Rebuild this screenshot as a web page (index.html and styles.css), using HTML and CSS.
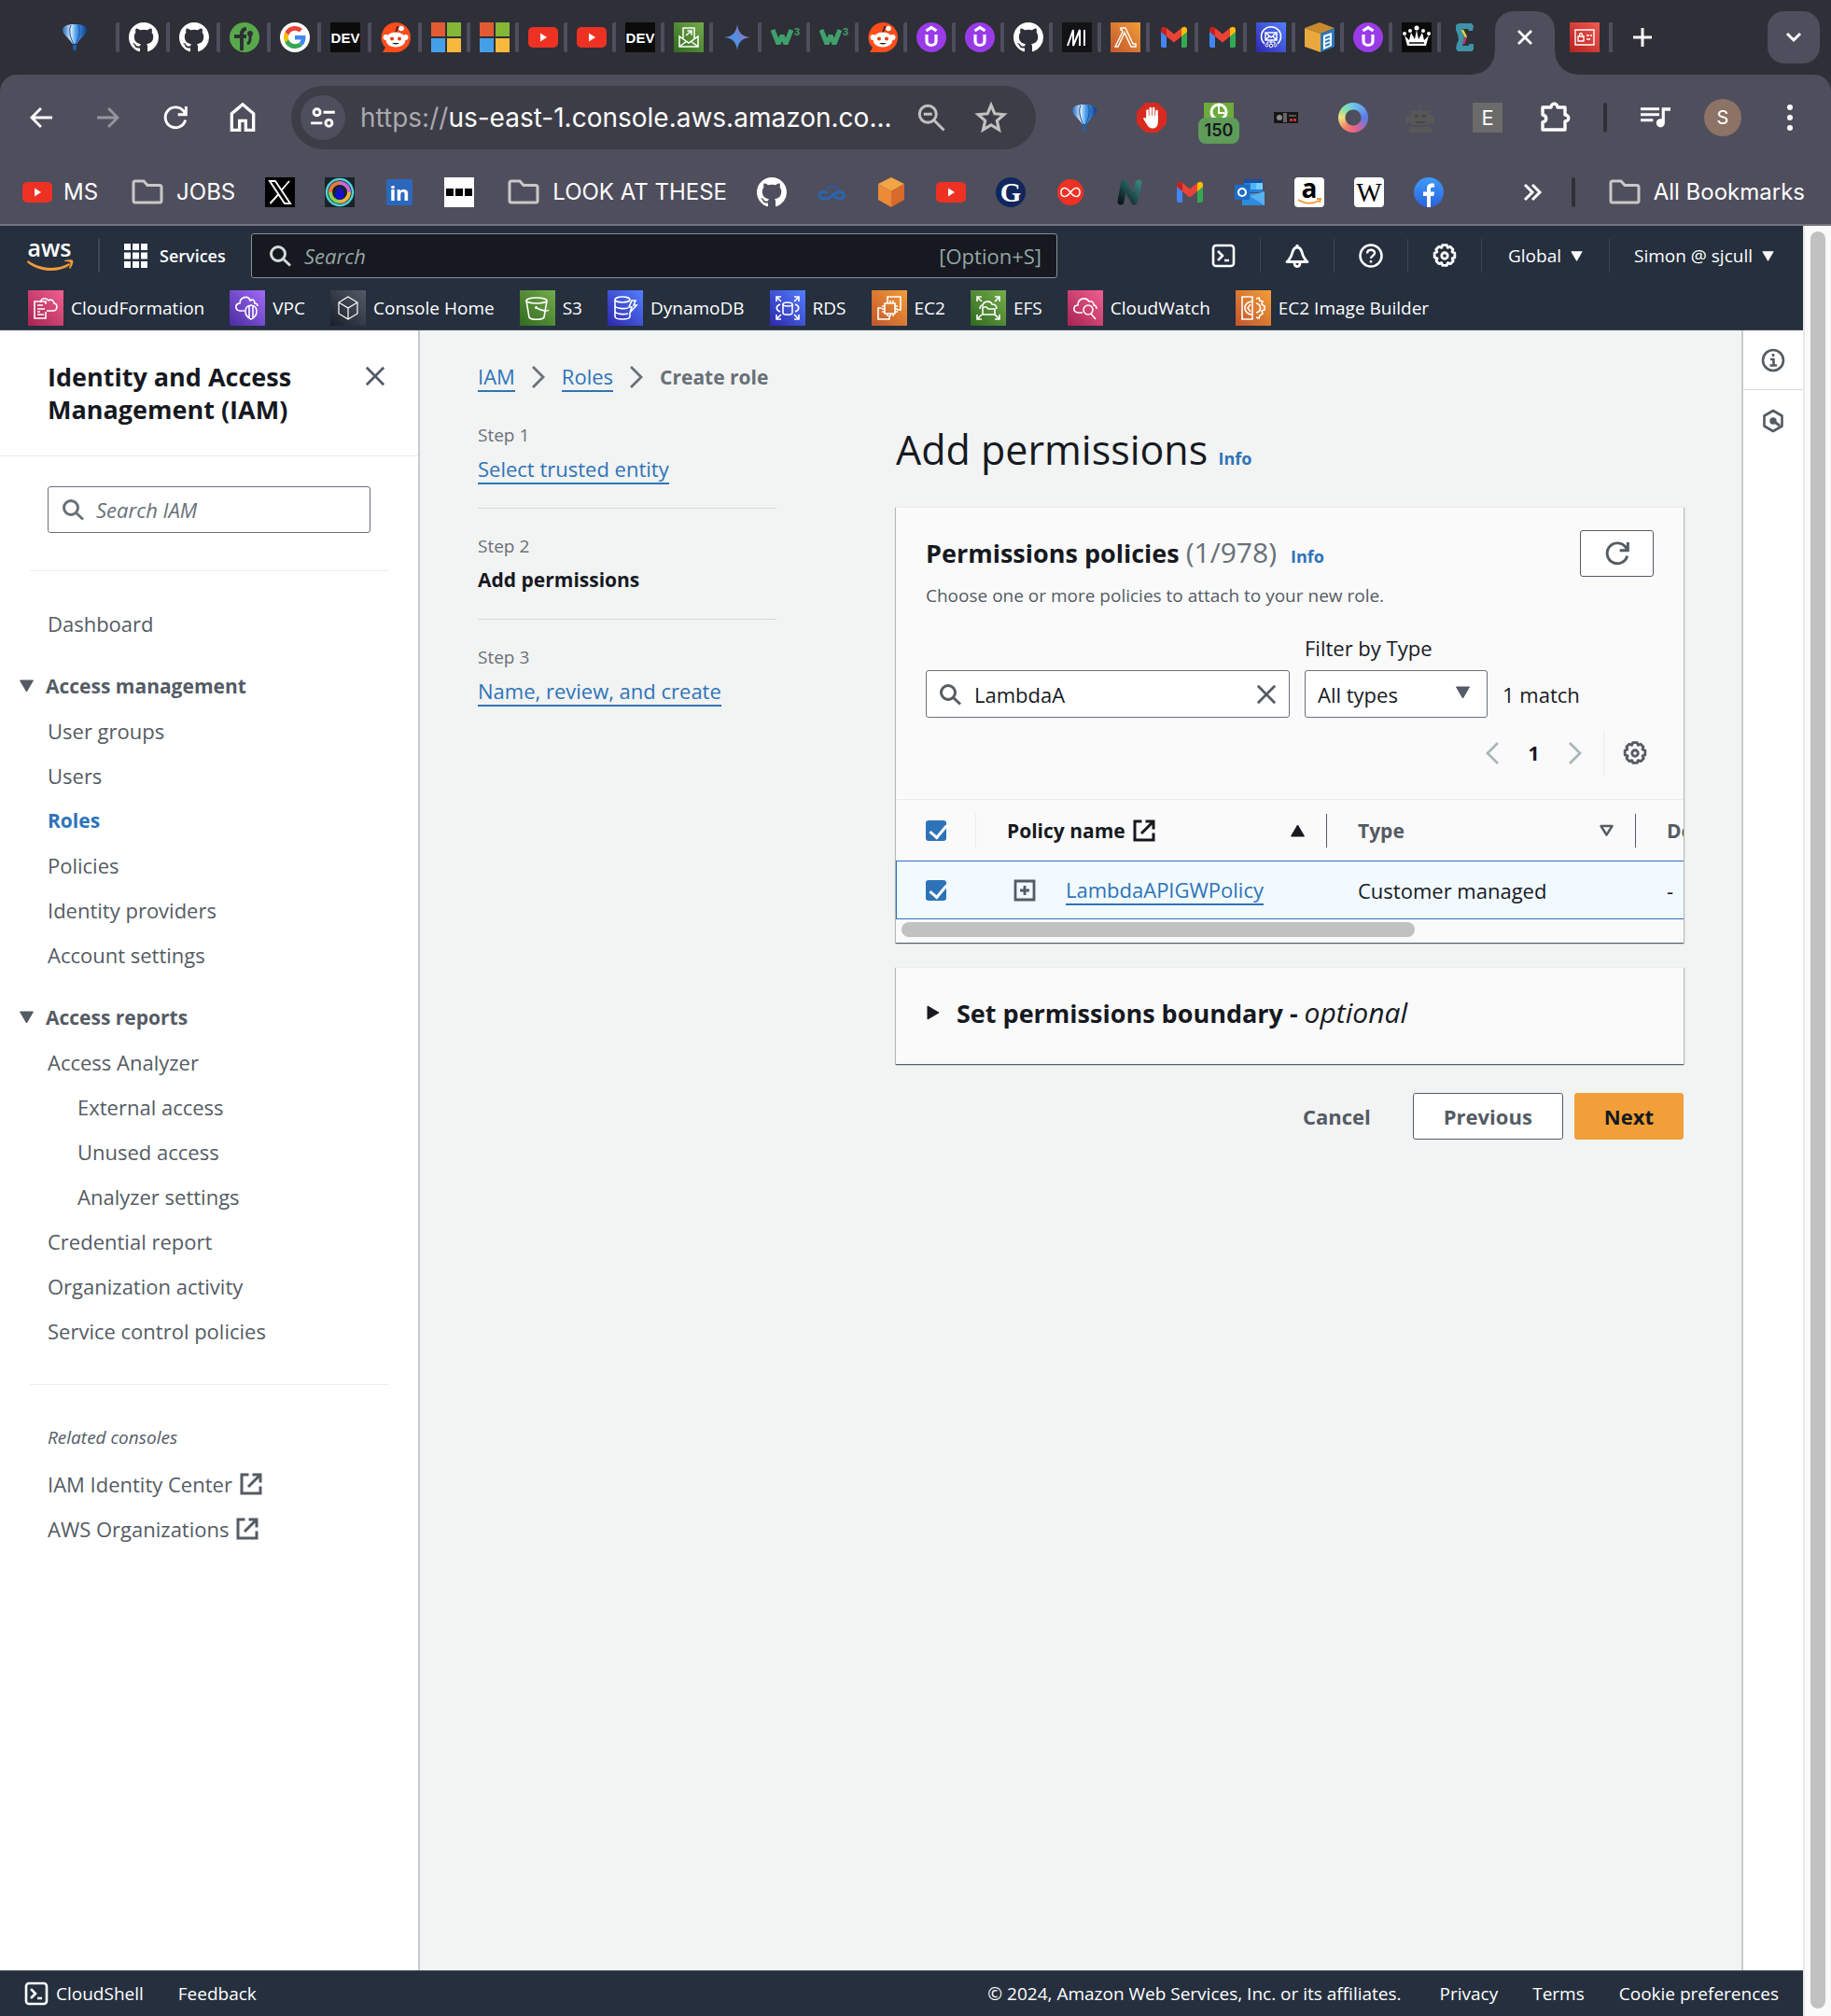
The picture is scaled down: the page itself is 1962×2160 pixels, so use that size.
FILE: index.html
```html
<!DOCTYPE html>
<html lang="en">
<head>
<meta charset="utf-8">
<title>Create role | IAM</title>
<link rel="stylesheet" href="styles.css">
</head>
<body>
<svg class="sprite" aria-hidden="true">
  <defs>
    <linearGradient id="g-blue" x1="0" y1="1" x2="1" y2="0"><stop offset="0" stop-color="#2e27ad"/><stop offset="1" stop-color="#527fff"/></linearGradient>
    <linearGradient id="g-green" x1="0" y1="1" x2="1" y2="0"><stop offset="0" stop-color="#2f6a20"/><stop offset="1" stop-color="#75ab4a"/></linearGradient>
    <linearGradient id="g-orange" x1="0" y1="1" x2="1" y2="0"><stop offset="0" stop-color="#c3562c"/><stop offset="1" stop-color="#f29d38"/></linearGradient>
    <linearGradient id="g-pink" x1="0" y1="1" x2="1" y2="0"><stop offset="0" stop-color="#a82352"/><stop offset="1" stop-color="#f0608f"/></linearGradient>
    <linearGradient id="g-purple" x1="0" y1="1" x2="1" y2="0"><stop offset="0" stop-color="#4b2ba2"/><stop offset="1" stop-color="#a06bf7"/></linearGradient>
    <linearGradient id="g-dark" x1="0" y1="1" x2="1" y2="0"><stop offset="0" stop-color="#191e28"/><stop offset="1" stop-color="#545b68"/></linearGradient>
    <linearGradient id="g-red" x1="0" y1="1" x2="1" y2="0"><stop offset="0" stop-color="#b5221f"/><stop offset="1" stop-color="#f25a50"/></linearGradient>
    <linearGradient id="g-balloon" x1="0" y1="0" x2="1" y2="0"><stop offset="0" stop-color="#2467b5"/><stop offset=".35" stop-color="#dcefff"/><stop offset=".55" stop-color="#4da0ee"/><stop offset="1" stop-color="#0e3f8f"/></linearGradient>
    <linearGradient id="g-gemini" x1="0" y1="1" x2="1" y2="0"><stop offset="0" stop-color="#2f9fd8"/><stop offset=".5" stop-color="#5b8be0"/><stop offset="1" stop-color="#b06ba8"/></linearGradient>
    <linearGradient id="g-n" x1="0" y1="1" x2="1" y2="0"><stop offset="0" stop-color="#0b1a1e"/><stop offset="1" stop-color="#36807c"/></linearGradient>
    <linearGradient id="g-fb" x1="0" y1="0" x2="0" y2="1"><stop offset="0" stop-color="#3f9cf8"/><stop offset="1" stop-color="#2a62e0"/></linearGradient>
  </defs>

  <symbol id="balloon" viewBox="0 0 32 32"><path d="M16 2c8 0 13 2 13 6.500C29 13 20.500 18 18.500 23h-5C11.500 18 3 13 3 8.500 3 4 8 2 16 2z" fill="url(#g-balloon)"/><path d="M12 3c-3 6 0 14 2.500 20M20 3c3 6 0 14-2.500 20" stroke="#184f9c" fill="none"/><path d="M14 24h4v4l-2 3-2-3z" fill="#1d5fb4"/></symbol>
  <symbol id="github" viewBox="0 0 16 16"><path fill="#fff" d="M8 0C3.58 0 0 3.58 0 8c0 3.54 2.290 6.530 5.470 7.590.4.070.55-.17.55-.38 0-.19-.01-.82-.01-1.490-2.010.37-2.530-.49-2.690-.94-.09-.23-.48-.94-.82-1.130-.28-.15-.68-.52-.01-.53.63-.01 1.080.58 1.230.82.72 1.210 1.870.87 2.330.66.070-.52.28-.87.51-1.070-1.780-.2-3.640-.89-3.640-3.950 0-.87.31-1.590.82-2.150-.08-.2-.36-1.020.080-2.120 0 0 .67-.21 2.200.82.64-.18 1.320-.27 2-.27s1.360.090 2 .27c1.530-1.040 2.200-.82 2.200-.82.44 1.100.16 1.920.080 2.120.51.56.82 1.270.82 2.150 0 3.070-1.870 3.750-3.650 3.950.29.25.54.73.54 1.480 0 1.070-.01 1.930-.01 2.200 0 .21.15.46.55.38A8.010 8.010 0 0016 8c0-4.420-3.580-8-8-8z"/></symbol>
  <symbol id="green-t" viewBox="0 0 32 32"><circle cx="16" cy="16" r="16" fill="#58a94c"/><path d="M5 15h13M13 30V13c0-4 2-6 5-6" stroke="#2c3136" stroke-width="4" fill="none"/><path d="M22 13v5c0 3-1 4-3 5" stroke="#2c3136" stroke-width="3" fill="none"/><circle cx="22" cy="12" r="3" fill="#2c3136"/></symbol>
  <symbol id="google" viewBox="0 0 48 48"><circle cx="24" cy="24" r="24" fill="#fff"/><g transform="translate(6 6) scale(.75)"><path fill="#ea4335" d="M24 9.500c3.540 0 6.710 1.220 9.210 3.600l6.850-6.850C35.900 2.380 30.470 0 24 0 14.620 0 6.510 5.380 2.560 13.220l7.980 6.190C12.430 13.720 17.740 9.500 24 9.500z"/><path fill="#4285f4" d="M46.980 24.550c0-1.570-.15-3.090-.38-4.550H24v9.020h12.940c-.58 2.960-2.260 5.480-4.780 7.180l7.730 6c4.510-4.180 7.090-10.360 7.090-17.650z"/><path fill="#fbbc05" d="M10.530 28.590c-.48-1.450-.76-2.990-.76-4.590s.27-3.140.76-4.590l-7.980-6.190C.92 16.460 0 20.120 0 24c0 3.880.92 7.540 2.560 10.780z"/><path fill="#34a853" d="M24 48c6.480 0 11.930-2.130 15.890-5.810l-7.730-6c-2.150 1.450-4.920 2.300-8.160 2.300-6.260 0-11.570-4.220-13.470-9.910l-7.980 6.190C6.510 42.620 14.620 48 24 48z"/></g></symbol>
  <symbol id="reddit" viewBox="0 0 32 32"><path d="M16 0a16 16 0 110 32H2l3-5A16 16 0 0116 0z" fill="#ff4d1c"/><path d="M16 11l2-6 4 1" stroke="#222" stroke-width="1.500" fill="none"/><circle cx="22" cy="6.500" r="2.800" fill="#fff"/><circle cx="5.500" cy="16" r="3" fill="#fff"/><circle cx="26.500" cy="16" r="3" fill="#fff"/><ellipse cx="16" cy="18.500" rx="10.500" ry="8" fill="#fff"/><circle cx="12" cy="17.500" r="2" fill="#e03c12"/><circle cx="20" cy="17.500" r="2" fill="#e03c12"/><path d="M12 22q4 3 8 0z" fill="#222"/></symbol>
  <symbol id="ms" viewBox="0 0 32 32"><path fill="#e25a31" d="M0 0h15v15H0z"/><path fill="#83b735" d="M17 0h15v15H17z"/><path fill="#459fe8" d="M0 17h15v15H0z"/><path fill="#f6b93c" d="M17 17h15v15H17z"/></symbol>
  <symbol id="yt" viewBox="0 0 32 32"><rect y="5" width="32" height="22" rx="5" fill="#ed3223"/><path fill="#fff" d="M13 11.500l7 4.500-7 4.500z"/></symbol>
  <symbol id="mailout" viewBox="0 0 32 32"><path fill="url(#g-green)" d="M0 0h32v32H0z"/><path d="M10 17V6h12v11M6 15v11h20V15l-10 7zM6 26l8-6M26 26l-8-6M13 14l6-5M14.500 9h4.500v4.500" stroke="#fff" stroke-width="1.500" fill="none"/></symbol>
  <symbol id="gemini" viewBox="0 0 32 32"><path fill="url(#g-gemini)" d="M16 2c1 9 5 13 14 14-9 1-13 5-14 14-1-9-5-13-14-14 9-1 13-5 14-14z"/></symbol>
  <symbol id="w3-mark" viewBox="0 0 32 32"><path d="M2 8l6 15 4-9 4 9 6-15" stroke="#3fa06c" stroke-width="5" stroke-linejoin="bevel" fill="none"/></symbol>
  <symbol id="udemy" viewBox="0 0 32 32"><circle cx="16" cy="16" r="16" fill="#9a3be8"/><path d="M10.500 9L16 5.500 21.500 9M11 13v7c0 6 10 6 10 0v-7" stroke="#fff" stroke-width="3.200" fill="none"/></symbol>
  <symbol id="em" viewBox="0 0 32 32"><path fill="#131316" d="M0 0h32v32H0z"/><path d="M6 25L12 8v17L19 8v17M24 8v17" stroke="#fff" stroke-width="2" stroke-linejoin="bevel" fill="none"/></symbol>
  <symbol id="lambda" viewBox="0 0 32 32"><path fill="url(#g-orange)" d="M0 0h32v32H0z"/><path d="M11 6h5l8 17h3v3h-5l-7-15-7 15H5l8-16-1-2h-1z" stroke="#fff" stroke-width="1.400" fill="none"/></symbol>
  <symbol id="gmail" viewBox="0 0 32 32"><path fill="#4285f4" d="M2 9l6 5v13H4a2 2 0 01-2-2z"/><path fill="#34a853" d="M30 9l-6 5v13h4a2 2 0 002-2z"/><path fill="#fbbc04" d="M24 6v9l6-5V8c0-3-3-4-5-2.500z"/><path fill="#c5221f" d="M8 6v9l-6-5V8c0-3 3-4 5-2.500z"/><path fill="#ea4335" d="M8 6l8 6.500L24 6v9l-8 6.500L8 15z"/></symbol>
  <symbol id="ses" viewBox="0 0 32 32"><path fill="url(#g-blue)" d="M0 0h32v32H0z"/><path d="M9 23a10.500 10.500 0 1114 0" fill="none" stroke="#fff" stroke-width="1.500"/><path d="M10 11h12v8H10zl6 5 6-5M10 19l4-4M22 19l-4-4" fill="none" stroke="#fff" stroke-width="1.500"/><path d="M16 19v4M12 21v2M20 21v2M12 21h8" stroke="#fff"/><g fill="#463fc8" stroke="#fff"><circle cx="16" cy="25" r="1.800"/><circle cx="11.500" cy="24.500" r="1.500"/><circle cx="20.500" cy="24.500" r="1.500"/></g></symbol>
  <symbol id="box" viewBox="0 0 32 32"><path d="M0 6l16-6 16 6-15 6z" fill="#c98a2c"/><path d="M0 6l17 6v20L0 26z" fill="#eaa93e"/><path d="M17 12l15-6v20l-15 6z" fill="#2b77bb"/><path d="M20 14l9-3v14l-9 4z" fill="#fff"/><path d="M22 17l5-2M22 21l5-2M22 25l5-2" stroke="#2b77bb" stroke-width="2"/></symbol>
  <symbol id="crown" viewBox="0 0 32 32"><path fill="#0a0a0a" d="M0 0h32v32H0z"/><path d="M6 25L3 14l5 5 2-8 4 7 2-10 2 10 4-7 2 8 5-5-3 11z" fill="#fff"/><g fill="#fff"><circle cx="3" cy="12" r="2"/><circle cx="9" cy="9" r="2"/><circle cx="16" cy="6" r="2.500"/><circle cx="23" cy="9" r="2"/><circle cx="29" cy="12" r="2"/></g><path d="M8 22h16" stroke="#0a0a0a" stroke-width="1.500"/></symbol>
  <symbol id="sigma" viewBox="0 0 32 32"><path d="M6 3l3-2h14l2 3-1 5h-4l-1-2h-6l1 6 1 3-1 6-1 3h6l2-2h4v6l-2 2H8l-2-3 1-5 2-4-1-6-2-5z" fill="#3f93a8"/><path d="M13 8l4 8" stroke="#e8d33a" stroke-width="2.500"/><path d="M17 16l-3 7" stroke="#b53a7a" stroke-width="2.500"/></symbol>
  <symbol id="iamcard" viewBox="0 0 32 32"><path fill="url(#g-red)" d="M0 0h32v32H0z"/><path d="M6 8h20v16H6zM9 15h6v5H9zM10.500 15v-2q1.500-3 3 0v2M18 14h3M22 14h2M18 18h4" stroke="#fff" stroke-width="1.400" fill="none"/></symbol>

  <symbol id="arrow" viewBox="0 0 24 24"><path fill="currentColor" d="M21 10.900H7.100l5.600-5.700L11.200 3.700 3 12l8.200 8.300 1.500-1.500-5.600-5.700H21z"/></symbol>
  <symbol id="reload" viewBox="0 0 24 24"><path d="M20 14a8.200 8.200 0 11-1.800-7.600L20 8.500M20.500 3v6.500H14" stroke="currentColor" stroke-width="2.200" fill="none"/></symbol>
  <symbol id="home" viewBox="0 0 24 24"><path d="M5 20V9.500l7-6 7 6V20h-5v-6h-4v6z" stroke="currentColor" stroke-width="2" fill="none"/></symbol>
  <symbol id="tune" viewBox="0 0 24 24"><g stroke="currentColor" stroke-width="2.500" fill="none"><circle cx="6.500" cy="7" r="3"/><path d="M12.500 7H23M1 17h10.500"/><circle cx="17.500" cy="17" r="3"/></g></symbol>
  <symbol id="zoomout" viewBox="0 0 24 24"><g stroke="currentColor" stroke-width="2" fill="none"><circle cx="9.500" cy="9.500" r="6"/><path d="M14 14l7 7M6.500 9.500h6"/></g></symbol>
  <symbol id="star" viewBox="0 0 24 24"><path d="M12 4l2.300 5.500 6 .5-4.500 4 1.300 5.800L12 16.700l-5.100 3.100L8.200 14l-4.500-4 6-.5z" stroke="currentColor" stroke-width="1.900" fill="none"/></symbol>
  <symbol id="hand" viewBox="0 0 32 32"><path d="M9.500 0h13L32 9.500v13L22.500 32h-13L0 22.500v-13z" fill="#d82a1f"/><g stroke="#fff" stroke-width="2.600" stroke-linecap="round"><path d="M11.500 17V8.500M14.800 16V6M18.100 16V6M21.500 18V9"/></g><path d="M10.200 14h12.600v7c0 4-2 6.500-5.500 6.500-4 0-5.300-2.500-7.300-5.500l-3-5c1-2 2.700-1 3.200 1z" fill="#fff"/></symbol>
  <symbol id="meter" viewBox="0 0 32 32"><path d="M0 0h32v18H0z" fill="#6dab3a"/><circle cx="16" cy="10" r="8" stroke="#fff" stroke-width="3" fill="none"/><path d="M16 3v8h6" stroke="#fff" stroke-width="2" fill="none"/></symbol>
  <symbol id="deck" viewBox="0 0 32 32"><path d="M3 10h26v12H3z" fill="#171717"/><circle cx="9" cy="16" r="3" fill="#888"/><path d="M13 11h4v10h-4z" fill="#666"/><path d="M19 13h8v2h-8z" fill="#555"/><path d="M20 17h3v3h-3zM24 17h3v3h-3z" fill="#c33"/></symbol>
  <symbol id="puzzle" viewBox="0 0 36 36"><path d="M5 7h9c0-5 7-5 7 0h8v8c5 0 5 7 0 7v9H5v-8c5-1 5-7 0-8z" stroke="currentColor" stroke-width="3.400" stroke-linejoin="round" fill="none"/></symbol>
  <symbol id="robot" viewBox="0 0 32 32"><g fill="#575757"><path d="M15 4h2v5h-2zM6 9h20v5h5v8h-5v2H6v-2H1v-8h5zM4 26h24v6H4z"/><circle cx="16" cy="3" r="2"/></g><path d="M10 13h4v3h-4zM18 13h4v3h-4zM11 20h10v2H11z" fill="#48484c"/></symbol>
  <symbol id="media" viewBox="0 0 24 24"><path fill="currentColor" d="M15 4H0v2.200h15V4zm0 4.500H0v2.200h15V8.500zM0 15.200h10V13H0v2.200zM17 4v9.180c-.31-.11-.65-.18-1-.18-1.900 0-3.400 1.500-3.400 3.400s1.500 3.400 3.400 3.400 3.400-1.500 3.400-3.400V6.500H24V4h-7z"/></symbol>
  <symbol id="folder" viewBox="0 0 40 32"><path d="M6 6q0-2 2-2h9l4 4.500h13q2 0 2 2V25q0 2-2 2H8q-2 0-2-2z" stroke="#c9c8c6" stroke-width="3" fill="none"/></symbol>
  <symbol id="xlogo" viewBox="0 0 32 32"><path fill="#000" d="M0 0h32v32H0z"/><path d="M5 4h6l16 24h-6zM26 4L17 14.500M5.500 28L14.500 18" stroke="#fff" stroke-width="1.900" fill="none"/></symbol>
  <symbol id="flame" viewBox="0 0 32 32"><path fill="#1a2328" d="M0 0h32v32H0z"/><circle cx="16" cy="16" r="14" fill="none" stroke="#4fd0dd" stroke-width="2.500"/><path d="M16 6a10 10 0 0110 10" stroke="#c86ad8" stroke-width="4" fill="none"/><path d="M26 16a10 10 0 01-10 10" stroke="#e8b23a" stroke-width="4" fill="none"/><path d="M16 26A10 10 0 016 16" stroke="#8fd04a" stroke-width="4" fill="none"/><path d="M6 16A10 10 0 0116 6" stroke="#e87a3a" stroke-width="4" fill="none"/><path d="M16 9c4 6 5 8 5 10a5 5 0 01-10 0c0-2 1-4 5-10z" fill="#1210c8"/></symbol>
  <symbol id="mono" viewBox="0 0 32 32"><path fill="#fff" d="M0 0h32v32H0z"/><path d="M2 12h8v8H2zM12 12h8v8h-8zM22 12h8v8h-8z"/></symbol>
  <symbol id="swirl" viewBox="0 0 32 32"><path d="M11 13c2-5 9-5 11-1l3 5" stroke="#2a5c9e" stroke-width="2" fill="none"/><path d="M12 17c-3-2-9-2-9 2 0 5 8 5 12 2s7-6 11-5c5 1 4 7-1 7-4 0-6-3-9-5" stroke="#2a66ae" stroke-width="3" fill="none"/></symbol>
  <symbol id="cube" viewBox="0 0 32 32"><path d="M16 0l14 7-14 8L2 7z" fill="#f3a447"/><path d="M2 7l14 8v17L2 24z" fill="#ec8a38"/><path d="M30 7l-14 8v17l14-8z" fill="#d86a2b"/></symbol>
  <symbol id="infinity" viewBox="0 0 32 32"><circle cx="16" cy="16" r="14" fill="#ee3124"/><path d="M16 16c-3-4-5-5-7-4.500-4 1-4 8 0 9 2 .5 4-.5 7-4.500s5-5 7-4.500c4 1 4 8 0 9-2 .5-4-.5-7-4.500z" stroke="#fff" stroke-width="1.500" fill="none"/></symbol>
  <symbol id="nlogo" viewBox="0 0 32 32"><path d="M6 26L9.500 6l11 20L25 6" stroke="url(#g-n)" stroke-width="7" stroke-linejoin="round" stroke-linecap="round" fill="none"/></symbol>
  <symbol id="outlook" viewBox="0 0 32 32"><path d="M10 2h20v14H10z" fill="#2a7cd8"/><path d="M10 2h20v4H10z" fill="#1c4fa0"/><path d="M17 6h6v7h-6z" fill="#4db3f2"/><path d="M23 6h7v7h-7z" fill="#6fd0fa"/><path d="M8 17h24v13H8z" fill="#2f8be0"/><path d="M32 15v15L16 20z" fill="#57b0f0"/><path d="M0 8h16v16H0z" fill="#1b6dc8"/><circle cx="8" cy="16" r="4" stroke="#fff" stroke-width="2.200" fill="none"/></symbol>
  <symbol id="facebook" viewBox="0 0 32 32"><circle cx="16" cy="16" r="16" fill="url(#g-fb)"/><path d="M14 32V20h-4v-4.500h4V12c0-4.500 3-6 8-5.300v4c-3-.3-4 .2-4 2.300v2.500h4L21.300 20H18v12z" fill="#fff"/></symbol>

  <symbol id="search" viewBox="0 0 24 24"><g stroke="currentColor" stroke-width="3" fill="none"><circle cx="10" cy="10" r="7.500"/><path d="M15.500 15.500l7.500 7"/></g></symbol>
  <symbol id="shell" viewBox="0 0 26 26"><g stroke="currentColor" stroke-width="2.600" fill="none"><rect x="2" y="2" width="22" height="22" rx="3"/><path d="M7 8l5 5-5 5M14 18h5"/></g></symbol>
  <symbol id="bell" viewBox="0 0 26 26"><path d="M2 19.500C6 16 7 13 8 9c1-3 2.500-5 5-5s4 2 5 5c1 4 2 7 6 10.500zM10 20c0 6 6 6 6 0M13 4V1" stroke="currentColor" stroke-width="2.800" stroke-linejoin="round" fill="none"/></symbol>
  <symbol id="help" viewBox="0 0 26 26"><circle cx="13" cy="13" r="11.500" stroke="currentColor" stroke-width="2.500" fill="none"/><path d="M9 10.500c0-5 8-5 8-.5 0 3-4 3-4 6M13 18v2.500" stroke="currentColor" stroke-width="2.400" fill="none"/></symbol>
  <symbol id="gear" viewBox="1 .5 24 24"><g stroke="currentColor" stroke-width="2.600" fill="none" stroke-linejoin="round"><path d="M10.800 2h4.400l.8 2.500 2.500-1 2.800 2.800-1 2.500 2.700 1v4.400l-2.500 1 1 2.500-2.800 2.800-2.700-1-.8 2.500h-4.400l-.8-2.500-2.500 1-2.800-2.800 1-2.500-2.700-1V9.800l2.500-1-1-2.500 2.800-2.800 2.700 1z"/><circle cx="13" cy="12.500" r="3"/></g></symbol>
  <symbol id="down" viewBox="0 0 16 14"><path d="M1 1h14L8 13z" fill="currentColor" stroke="currentColor" stroke-linejoin="round"/></symbol>
  <symbol id="downline" viewBox="0 0 16 14"><path d="M2 2h12L8 11.500z" fill="none" stroke="currentColor" stroke-width="2.400" stroke-linejoin="round"/></symbol>
  <symbol id="close" viewBox="0 0 24 24"><path d="M2 2l20 20M22 2L2 22" stroke="currentColor" stroke-width="3"/></symbol>
  <symbol id="external" viewBox="0 0 24 24"><path d="M9.500 2H2v20h20v-7.500M13.500 2H22v8.500M22 2L9 15" stroke="currentColor" stroke-width="3" fill="none"/></symbol>
  <symbol id="chev" viewBox="0 0 16 26"><path d="M2 2l11 11L2 24" stroke="currentColor" stroke-width="2.800" fill="none"/></symbol>
  <symbol id="info" viewBox="0 0 26 26"><circle cx="13" cy="13" r="11" stroke="currentColor" stroke-width="2.600" fill="none"/><path d="M13 6v3M10 12h3.500v6.500M9.500 18.500h7.500" stroke="currentColor" stroke-width="2.600" fill="none"/></symbol>
  <symbol id="hex" viewBox="0 0 26 26"><path d="M13 2l9.500 5.500v11L13 24l-9.500-5.500v-11z" stroke="currentColor" stroke-width="2.600" stroke-linejoin="round" fill="none"/><circle cx="13" cy="13" r="3.700" fill="currentColor"/><path d="M13 13l7 5" stroke="currentColor" stroke-width="3"/></symbol>
  <symbol id="plusbox" viewBox="0 0 24 24"><path d="M2 2h20v20H2zM12 7v10M7 12h10" stroke="currentColor" stroke-width="2.800" fill="none"/></symbol>

  <symbol id="s-cfn" viewBox="0 0 38 38"><path fill="url(#g-pink)" d="M0 0h38v38H0z"/><path d="M19 23v7H7V12h12v3M10 16h6M10 20h8M10 23h3M10 26h7M20 22h7c5 0 5-8 1-8-1-5-5-4-6-3-3-4-9-2-8 2" stroke="#fff" stroke-width="1.600" fill="none"/></symbol>
  <symbol id="s-vpc" viewBox="0 0 38 38"><path fill="url(#g-purple)" d="M0 0h38v38H0z"/><path d="M16 22h-5c-6-1-5-8 0-8 0-7 9-9 11-3 3-2 5 0 5 3 3 0 3 2 3 3M23 16c5 1 6 3 6 7s-2 6-6 8c-4-2-6-4-6-8s1-6 6-7zM21 17v13M25 17v13" stroke="#fff" stroke-width="1.600" fill="none"/></symbol>
  <symbol id="s-home" viewBox="0 0 38 38"><path fill="url(#g-dark)" d="M0 0h38v38H0z"/><path d="M19 7l10 6v12l-10 6-10-6V13zM9 13l10 6 10-6M19 19v12" stroke="#fff" stroke-width="1.200" fill="none"/></symbol>
  <symbol id="s-s3" viewBox="0 0 38 38"><path fill="url(#g-green)" d="M0 0h38v38H0z"/><path d="M7 11l3 18c2 3 14 3 16 0l3-18" stroke="#fff" stroke-width="1.600" fill="none"/><ellipse cx="18" cy="11" rx="11" ry="3" stroke="#fff" stroke-width="1.600" fill="none"/><path d="M18 19c6 3 12 4 13 2" stroke="#fff" stroke-width="1.600" fill="none"/><circle cx="17.500" cy="18.500" r="1.500" fill="#fff"/></symbol>
  <symbol id="s-ddb" viewBox="0 0 38 38"><path fill="url(#g-blue)" d="M0 0h38v38H0z"/><g stroke="#fff" stroke-width="1.600" fill="none"><ellipse cx="16" cy="10" rx="8" ry="3"/><path d="M8 10v18c0 4 16 4 16 0v-4M8 16c0 4 10 4 14 3M8 22c0 4 10 4 14 3M26 11h4l-2 5h3l-7 8 2-6h-3z"/></g></symbol>
  <symbol id="s-rds" viewBox="0 0 38 38"><path fill="url(#g-blue)" d="M0 0h38v38H0z"/><g stroke="#fff" stroke-width="1.600" fill="none"><path d="M7 12V7h5M7 7l5 5M26 7h5v5M31 7l-5 5M7 26v5h5M7 31l5-5M26 31h5v-5M31 31l-5-5M11 15c-5 2-5 6 0 8M27 15c5 2 5 6 0 8"/><ellipse cx="19" cy="15" rx="5" ry="2"/><path d="M14 15v9c0 3 10 3 10 0v-9"/></g></symbol>
  <symbol id="s-ec2" viewBox="0 0 38 38"><path fill="url(#g-orange)" d="M0 0h38v38H0z"/><path d="M17 11V7h14v14h-4M11 19H7v12h12v-4M14 14h11v11H14zM17 11v3M20 11v3M23 11v3M17 25v3M20 25v3M23 25v3M11 17h3M11 20h3M11 23h3M25 17h3M25 20h3M25 23h3" stroke="#fff" stroke-width="1.600" fill="none"/></symbol>
  <symbol id="s-efs" viewBox="0 0 38 38"><path fill="url(#g-green)" d="M0 0h38v38H0z"/><path d="M7 12V7h5M7 7l5 5M26 7h5v5M31 7l-5 5M7 26v5h5M7 31l5-5M26 31h5v-5M31 31l-5-5M13 26v-8h4l2 2h7v6zM10 20c0-3 2-4 3-4 1-5 9-5 10-1 3 0 5 2 5 5" stroke="#fff" stroke-width="1.600" fill="none"/></symbol>
  <symbol id="s-cw" viewBox="0 0 38 38"><path fill="url(#g-pink)" d="M0 0h38v38H0z"/><g stroke="#fff" stroke-width="1.600" fill="none"><path d="M16 24h-5c-6-1-5-8 0-8 0-8 9-9 12-4 3-1 5 1 5 4 3 0 3 3 3 4"/><circle cx="22" cy="21" r="5"/><path d="M25 25l5 6"/></g></symbol>
  <symbol id="s-img" viewBox="0 0 38 38"><path fill="url(#g-orange)" d="M0 0h38v38H0z"/><path d="M7 7h11v24H7zM18 12c-6 0-9 5-8 8 1 4 4 6 8 6M16 15l-3 4 3 4M22 9l3-1 1 3 3 1-1 3 3 2v4l-3 1 1 3-3 2-1 3-3-1M22 14c6 1 6 9 0 10" stroke="#fff" stroke-width="1.600" fill="none"/></symbol>
</svg>

<header class="browser">
  <nav class="tabs" aria-label="Tabs">
    <button class="tab pinned" aria-label="Pinned"><svg class="fav"><use href="#balloon"/></svg></button>
    <button class="tab wide"><svg class="fav"><use href="#github"/></svg></button>
    <button class="tab wide"><svg class="fav"><use href="#github"/></svg></button>
    <button class="tab wide"><svg class="fav"><use href="#green-t"/></svg></button>
    <button class="tab wide"><svg class="fav"><use href="#google"/></svg></button>
    <button class="tab wide"><svg class="fav black" viewBox="0 0 32 32"><text class="mark-dev" x="16" y="22">DEV</text></svg></button>
    <button class="tab wide"><svg class="fav"><use href="#reddit"/></svg></button>
    <button class="tab"><svg class="fav"><use href="#ms"/></svg></button>
    <button class="tab"><svg class="fav"><use href="#ms"/></svg></button>
    <button class="tab"><svg class="fav"><use href="#yt"/></svg></button>
    <button class="tab"><svg class="fav"><use href="#yt"/></svg></button>
    <button class="tab"><svg class="fav black" viewBox="0 0 32 32"><text class="mark-dev" x="16" y="22">DEV</text></svg></button>
    <button class="tab"><svg class="fav"><use href="#mailout"/></svg></button>
    <button class="tab"><svg class="fav"><use href="#gemini"/></svg></button>
    <button class="tab"><svg class="fav" viewBox="0 0 32 32"><use href="#w3-mark"/><text class="mark-w3" x="25" y="14">3</text></svg></button>
    <button class="tab"><svg class="fav" viewBox="0 0 32 32"><use href="#w3-mark"/><text class="mark-w3" x="25" y="14">3</text></svg></button>
    <button class="tab"><svg class="fav"><use href="#reddit"/></svg></button>
    <button class="tab"><svg class="fav"><use href="#udemy"/></svg></button>
    <button class="tab"><svg class="fav"><use href="#udemy"/></svg></button>
    <button class="tab"><svg class="fav"><use href="#github"/></svg></button>
    <button class="tab"><svg class="fav"><use href="#em"/></svg></button>
    <button class="tab"><svg class="fav"><use href="#lambda"/></svg></button>
    <button class="tab"><svg class="fav"><use href="#gmail"/></svg></button>
    <button class="tab"><svg class="fav"><use href="#gmail"/></svg></button>
    <button class="tab"><svg class="fav"><use href="#ses"/></svg></button>
    <button class="tab"><svg class="fav"><use href="#box"/></svg></button>
    <button class="tab"><svg class="fav"><use href="#udemy"/></svg></button>
    <button class="tab"><svg class="fav"><use href="#crown"/></svg></button>
    <button class="tab"><svg class="fav"><use href="#sigma"/></svg></button>
    <button class="tab-active" aria-label="Close tab"><svg class="x" viewBox="0 0 16 16"><path d="M1 1l14 14M15 1L1 15" stroke="#fff" stroke-width="2.800"/></svg></button>
    <button class="tab-last"><svg class="fav"><use href="#iamcard"/></svg></button>
    <button class="tab-new" aria-label="New tab"><svg viewBox="0 0 20 20"><path d="M10 0v20M0 10h20" stroke="#fff" stroke-width="3"/></svg></button>
    <button class="tab-menu" aria-label="Search tabs"><svg viewBox="0 0 16 12"><path d="M1 2l7 7 7-7" stroke="#fff" stroke-width="3" fill="none"/></svg></button>
  </nav>

  <div class="chrome">
    <div class="toolbar">
      <button class="tool" aria-label="Back"><svg class="i32"><use href="#arrow"/></svg></button>
      <button class="tool dim" aria-label="Forward"><svg class="i32 flip"><use href="#arrow"/></svg></button>
      <button class="tool" aria-label="Reload"><svg class="i32"><use href="#reload"/></svg></button>
      <button class="tool" aria-label="Home"><svg class="i40"><use href="#home"/></svg></button>
      <div class="omnibox">
        <button class="site" aria-label="Site information"><svg class="i28"><use href="#tune"/></svg></button>
        <label class="scheme" for="url">https://</label>
        <input id="url" class="url" type="text" value="us-east-1.console.aws.amazon.co...">
        <button class="omni-btn" aria-label="Zoom"><svg class="i36"><use href="#zoomout"/></svg></button>
        <button class="omni-btn" aria-label="Bookmark"><svg class="i40"><use href="#star"/></svg></button>
      </div>
      <button class="tool"><svg class="i32"><use href="#balloon"/></svg></button>
      <button class="tool"><svg class="i32"><use href="#hand"/></svg></button>
      <button class="tool meter"><svg class="i32"><use href="#meter"/></svg><span class="count">150</span></button>
      <button class="tool"><svg class="i32"><use href="#deck"/></svg></button>
      <button class="tool"><span class="wheel"></span></button>
      <button class="tool"><svg class="i32"><use href="#robot"/></svg></button>
      <button class="tool"><span class="e-badge">E</span></button>
      <button class="tool"><svg class="i36"><use href="#puzzle"/></svg></button>
      <span class="bar"></span>
      <button class="tool" aria-label="Media"><svg class="i32"><use href="#media"/></svg></button>
      <button class="tool" aria-label="Profile"><span class="avatar">S</span></button>
      <button class="tool" aria-label="Menu"><svg class="dots" viewBox="0 0 8 36"><g fill="#fff"><circle cx="4" cy="7" r="3"/><circle cx="4" cy="18" r="3"/><circle cx="4" cy="29" r="3"/></g></svg></button>
    </div>

    <nav class="bookmarks" aria-label="Bookmarks">
      <a href="#"><svg class="fav"><use href="#yt"/></svg>MS</a>
      <a href="#"><svg class="folder"><use href="#folder"/></svg>JOBS</a>
      <a href="#"><svg class="fav"><use href="#xlogo"/></svg></a>
      <a href="#"><svg class="fav"><use href="#flame"/></svg></a>
      <a href="#"><svg class="fav" viewBox="0 0 32 32"><rect x="2" y="2" width="28" height="28" rx="2" fill="#2b67bd"/><text class="mark-in" x="16" y="25">in</text></svg></a>
      <a href="#"><svg class="fav"><use href="#mono"/></svg></a>
      <a href="#"><svg class="folder"><use href="#folder"/></svg>LOOK AT THESE</a>
      <a href="#"><svg class="fav"><use href="#github"/></svg></a>
      <a href="#"><svg class="fav"><use href="#swirl"/></svg></a>
      <a href="#"><svg class="fav"><use href="#cube"/></svg></a>
      <a href="#"><svg class="fav"><use href="#yt"/></svg></a>
      <a href="#"><svg class="fav" viewBox="0 0 32 32"><circle cx="16" cy="16" r="16" fill="#10265c"/><text class="mark-g" x="16" y="26">G</text></svg></a>
      <a href="#"><svg class="fav"><use href="#infinity"/></svg></a>
      <a href="#"><svg class="fav"><use href="#nlogo"/></svg></a>
      <a href="#"><svg class="fav"><use href="#gmail"/></svg></a>
      <a href="#"><svg class="fav"><use href="#outlook"/></svg></a>
      <a href="#"><svg class="fav" viewBox="0 0 32 32"><rect width="32" height="32" rx="4" fill="#fff"/><text class="mark-a" x="16" y="22">a</text><path d="M4 24q12 7 22 1M24 23h4l-1 4" stroke="#f19a38" stroke-width="2" fill="none"/></svg></a>
      <a href="#"><svg class="fav" viewBox="0 0 32 32"><rect width="32" height="32" rx="4" fill="#fff"/><text class="mark-w" x="16" y="26">W</text></svg></a>
      <a href="#"><svg class="fav"><use href="#facebook"/></svg></a>
      <button class="more" aria-label="More bookmarks"><svg viewBox="0 0 20 18"><path d="M2 1l8 8-8 8M10 1l8 8-8 8" stroke="#fff" stroke-width="3" fill="none"/></svg></button>
      <span class="bar"></span>
      <a href="#"><svg class="folder"><use href="#folder"/></svg>All Bookmarks</a>
    </nav>
  </div>
</header>

<div class="viewport">
<div class="page">
  <header class="aws">
    <div class="aws-top">
      <a class="logo" href="#" aria-label="AWS home"><svg viewBox="0 0 50 36"><text class="mark-aws" x="24" y="19">aws</text><path d="M1 23c14 10 32 10 44 3l1 2C33 37 13 36 0 25z" fill="#f19a38"/><path d="M40 23c4-1 8-1 9 0s0 5-3 9l-1-1c1-3 2-5 1-6s-3-1-6-1z" fill="#f19a38"/></svg></a>
      <button class="services"><svg viewBox="0 0 25 26"><path d="M0 0h7v7H0zM9 0h7v7H9zM18 0h7v7h-7zM0 9.500h7v7H0zM9 9.500h7v7H9zM18 9.500h7v7h-7zM0 19h7v7H0zM9 19h7v7H9zM18 19h7v7h-7z" fill="#fff"/></svg>Services</button>
      <div class="aws-search"><svg class="i24"><use href="#search"/></svg><input type="text" placeholder="Search" aria-label="Search"><span>[Option+S]</span></div>
      <div class="aws-tools">
        <button aria-label="CloudShell"><svg class="i26"><use href="#shell"/></svg></button>
        <button aria-label="Notifications"><svg class="i26"><use href="#bell"/></svg></button>
        <button aria-label="Help"><svg class="i26"><use href="#help"/></svg></button>
        <button aria-label="Settings"><svg class="i26"><use href="#gear"/></svg></button>
        <button class="menu">Global<svg class="tri"><use href="#down"/></svg></button>
        <button class="menu account">Simon @ sjcull<svg class="tri"><use href="#down"/></svg></button>
      </div>
    </div>
    <nav class="shortcuts" aria-label="Favorites">
      <a href="#"><svg><use href="#s-cfn"/></svg>CloudFormation</a>
      <a href="#"><svg><use href="#s-vpc"/></svg>VPC</a>
      <a href="#"><svg><use href="#s-home"/></svg>Console Home</a>
      <a href="#"><svg><use href="#s-s3"/></svg>S3</a>
      <a href="#"><svg><use href="#s-ddb"/></svg>DynamoDB</a>
      <a href="#"><svg><use href="#s-rds"/></svg>RDS</a>
      <a href="#"><svg><use href="#s-ec2"/></svg>EC2</a>
      <a href="#"><svg><use href="#s-efs"/></svg>EFS</a>
      <a href="#"><svg><use href="#s-cw"/></svg>CloudWatch</a>
      <a href="#"><svg><use href="#s-img"/></svg>EC2 Image Builder</a>
    </nav>
  </header>

  <div class="body">
    <aside class="side">
      <div class="side-head">
        <h2>Identity and Access Management (IAM)</h2>
        <button aria-label="Close navigation"><svg class="i22"><use href="#close"/></svg></button>
      </div>
      <div class="side-search"><svg class="i24"><use href="#search"/></svg><input type="text" placeholder="Search IAM" aria-label="Search IAM"></div>
      <nav class="side-nav">
        <ul><li><a href="#">Dashboard</a></li></ul>
        <button class="group"><svg class="tri-lg"><use href="#down"/></svg>Access management</button>
        <ul>
          <li><a href="#">User groups</a></li>
          <li><a href="#">Users</a></li>
          <li><a href="#" class="current">Roles</a></li>
          <li><a href="#">Policies</a></li>
          <li><a href="#">Identity providers</a></li>
          <li><a href="#">Account settings</a></li>
        </ul>
        <button class="group"><svg class="tri-lg"><use href="#down"/></svg>Access reports</button>
        <ul>
          <li><a href="#">Access Analyzer</a>
            <ul>
              <li><a href="#">External access</a></li>
              <li><a href="#">Unused access</a></li>
              <li><a href="#">Analyzer settings</a></li>
            </ul>
          </li>
          <li><a href="#">Credential report</a></li>
          <li><a href="#">Organization activity</a></li>
          <li><a href="#">Service control policies</a></li>
        </ul>
      </nav>
      <nav class="side-nav related">
        <h3>Related consoles</h3>
        <ul>
          <li><a href="#">IAM Identity Center<svg class="i24"><use href="#external"/></svg></a></li>
          <li><a href="#">AWS Organizations<svg class="i24"><use href="#external"/></svg></a></li>
        </ul>
      </nav>
    </aside>

    <main class="main">
      <nav class="crumbs" aria-label="Breadcrumb">
        <a class="link" href="#">IAM</a><svg class="chev"><use href="#chev"/></svg><a class="link" href="#">Roles</a><svg class="chev"><use href="#chev"/></svg><span>Create role</span>
      </nav>
      <div class="wizard">
        <ol class="steps">
          <li><small>Step 1</small><a class="link" href="#">Select trusted entity</a></li>
          <li><small>Step 2</small><b>Add permissions</b></li>
          <li><small>Step 3</small><a class="link" href="#">Name, review, and create</a></li>
        </ol>
        <div class="content">
          <h1>Add permissions <a class="info" href="#">Info</a></h1>
          <section class="card">
            <div class="card-head">
              <div class="title-row">
                <div>
                  <h2>Permissions policies <span>(1/978)</span> <a class="info" href="#">Info</a></h2>
                  <p>Choose one or more policies to attach to your new role.</p>
                </div>
                <button class="btn refresh" aria-label="Refresh"><svg class="i32"><use href="#reload"/></svg></button>
              </div>
              <div class="filters">
                <div class="field search"><svg class="i24"><use href="#search"/></svg><input type="text" value="LambdaA" aria-label="Filter policies"><button aria-label="Clear"><svg class="i22"><use href="#close"/></svg></button></div>
                <div class="type">
                  <label for="type">Filter by Type</label>
                  <div class="field select"><select id="type"><option>All types</option></select><svg class="tri-lg"><use href="#down"/></svg></div>
                </div>
                <span class="match">1 match</span>
              </div>
              <div class="pager">
                <button aria-label="Previous page"><svg class="chev flip"><use href="#chev"/></svg></button>
                <b>1</b>
                <button aria-label="Next page"><svg class="chev"><use href="#chev"/></svg></button>
                <button class="prefs" aria-label="Preferences"><svg class="i26"><use href="#gear"/></svg></button>
              </div>
            </div>
            <div class="scroller">
              <table>
                <colgroup><col class="c-check"><col class="c-name"><col class="c-type"><col></colgroup>
                <thead>
                  <tr>
                    <th><div class="th light"><input type="checkbox" checked aria-label="Select all"></div></th>
                    <th><div class="th dark">Policy name<svg class="i24"><use href="#external"/></svg><svg class="tri-lg sort flip-v"><use href="#down"/></svg></div></th>
                    <th><div class="th">Type<svg class="tri-lg sort"><use href="#downline"/></svg></div></th>
                    <th><div class="th last">Description</div></th>
                  </tr>
                </thead>
                <tbody>
                  <tr>
                    <td><input type="checkbox" checked aria-label="Select LambdaAPIGWPolicy"></td>
                    <td><div class="name"><button aria-label="Expand"><svg class="i24"><use href="#plusbox"/></svg></button><a class="link" href="#">LambdaAPIGWPolicy</a></div></td>
                    <td>Customer managed</td>
                    <td>-</td>
                  </tr>
                </tbody>
              </table>
            </div>
            <div class="hbar"><span></span></div>
          </section>
          <section class="card boundary">
            <button><svg viewBox="0 0 14 16"><path d="M1 1v14l12-7z" fill="#16191f" stroke="#16191f" stroke-linejoin="round"/></svg><span>Set permissions boundary - <i>optional</i></span></button>
          </section>
          <div class="actions">
            <button class="btn plain">Cancel</button>
            <button class="btn">Previous</button>
            <button class="btn primary">Next</button>
          </div>
        </div>
      </div>
    </main>

    <aside class="rail">
      <button aria-label="Info panel"><svg class="i26"><use href="#info"/></svg></button>
      <button aria-label="Tutorials"><svg class="i26"><use href="#hex"/></svg></button>
    </aside>
  </div>

  <footer class="foot">
    <a href="#"><svg class="i26"><use href="#shell"/></svg>CloudShell</a>
    <a href="#">Feedback</a>
    <span class="copy">© 2024, Amazon Web Services, Inc. or its affiliates.</span>
    <a href="#">Privacy</a>
    <a href="#">Terms</a>
    <a href="#">Cookie preferences</a>
  </footer>
</div>
<div class="vbar"><span></span></div>
</div>
</body>
</html>
```
FILE: styles.css
```css
:root {
  --ember: "Open Sans", "Noto Sans", sans-serif;
  --ui: Inter, "Liberation Sans", sans-serif;
  --blue: #2e73b8;
  --ink: #16191f;
  --gray: #545b64;
  --mid: #687078;
  --line: #eaeded;
}
* { box-sizing: border-box; }
body {
  margin: 0;
  min-height: 100vh;
  display: flex;
  flex-direction: column;
  font: 400 22px/30px var(--ember);
  color: var(--ink);
  background: #f2f3f3;
}
button, input, select { font: inherit; color: inherit; background: none; border: 0; margin: 0; padding: 0; }
button { display: flex; align-items: center; justify-content: center; }
input { outline: 0; min-width: 0; }
ul, ol { list-style: none; margin: 0; padding: 0; }
h1, h2, h3, p { margin: 0; }
a { color: inherit; text-decoration: none; }
svg { display: block; flex: none; overflow: visible; }
.sprite { position: absolute; width: 0; height: 0; overflow: hidden; }
.fav, .i32 { width: 32px; height: 32px; }
.i22 { width: 22px; height: 22px; }
.i24 { width: 24px; height: 24px; }
.i26 { width: 26px; height: 26px; }
.i28 { width: 28px; height: 28px; }
.i36 { width: 36px; height: 36px; }
.i40 { width: 40px; height: 40px; }
.tri { width: 13px; height: 13px; }
.tri-lg { width: 17px; height: 14px; }
.chev { width: 16px; height: 26px; }
.flip { transform: scaleX(-1); }
.flip-v { transform: scaleY(-1); }

/* Lettered site marks */
.black { background: #0b0b0c; }
.mark-dev, .mark-in, .mark-g, .mark-a, .mark-w, .mark-aws { text-anchor: middle; }
.mark-dev { font: 700 15px "Liberation Sans", sans-serif; fill: #fff; }
.mark-w3 { font: 700 11px "Liberation Sans", sans-serif; fill: #3fa06c; }
.mark-in { font: 700 22px var(--ember); fill: #fff; }
.mark-g { font: 700 29px "Liberation Serif", serif; fill: #fff; }
.mark-a { font: 700 28px var(--ember); }
.mark-w { font: 400 29px "Liberation Serif", serif; }
.mark-aws { font: 600 25px var(--ember); fill: #fff; }

/* Browser window */
.browser { background: #2f2f37; font-family: var(--ui); color: #fff; }
.tabs { display: flex; height: 80px; align-items: center; padding-right: 12px; }
.tab { width: 52px; height: 32px; padding-left: 10px; border-left: 4px solid #4f4e5d; border-radius: 2px; justify-content: flex-start; }
.tab.wide { width: 54px; }
.tab.pinned { width: 124px; padding-left: 64px; border: 0; }
.tab-active {
  position: relative;
  align-self: flex-end;
  width: 64px;
  height: 68px;
  margin-left: 10px;
  border-radius: 20px 20px 0 0;
  background: #4f4e5d;
  padding-bottom: 12px;
}
.tab-active::before, .tab-active::after {
  content: "";
  position: absolute;
  bottom: 0;
  width: 24px;
  height: 24px;
  left: -24px;
  background: radial-gradient(circle at 0 0, transparent 23px, #4f4e5d 24px);
}
.tab-active::after { left: auto; right: -24px; background: radial-gradient(circle at 100% 0, transparent 23px, #4f4e5d 24px); }
.x { width: 16px; height: 16px; }
.tab-last { width: 62px; height: 32px; padding-right: 10px; border-right: 4px solid #4f4e5d; }
.tab-last svg { margin-left: 16px; }
.tab-new { width: 64px; }
.tab-new svg { width: 20px; height: 20px; }
.tab-menu { width: 56px; height: 56px; margin-left: auto; border-radius: 18px; background: #4f4e5d; }
.tab-menu svg { width: 16px; height: 12px; }
.chrome { background: #4f4e5d; border-radius: 18px 18px 0 0; border-bottom: 2px solid #757480; }
.toolbar { display: flex; align-items: center; height: 92px; padding: 0 8px; }
.tool { width: 72px; height: 56px; flex: none; }
.dim { color: #96959e; }
.omnibox { display: flex; align-items: center; flex: 1; height: 68px; min-width: 0; margin: 0 16px; padding: 0 16px 0 10px; border-radius: 34px; background: #3d3d47; font-size: 28px; }
.site { width: 48px; height: 48px; border-radius: 50%; background: #4f4e5d; margin-right: 16px; flex: none; }
.scheme { color: #a9a9ae; }
.url { flex: 1; height: 48px; }
.omni-btn { width: 64px; color: #c2c1c0; flex: none; }
.meter { position: relative; }
.count { position: absolute; top: 28px; left: 14px; width: 44px; height: 28px; border-radius: 8px; background: #5f9c59; color: #16191f; font-size: 18px; font-weight: 600; line-height: 28px; text-align: center; }
.wheel { width: 32px; height: 32px; border-radius: 50%; background: radial-gradient(#4f4e5d 0 8px, transparent 9px), conic-gradient(#6fc6e8, #5b7bea 90deg, #e85f8a 170deg, #f0876a 220deg, #f2e07a 270deg, #7ce0b0 320deg, #6fc6e8); }
.e-badge { width: 32px; height: 32px; line-height: 32px; font-size: 22px; background: #6b6b69; }
.avatar { width: 40px; height: 40px; line-height: 40px; border-radius: 50%; background: #8d7266; font-size: 20px; }
.dots { width: 8px; height: 36px; }
.bar { width: 4px; height: 32px; margin: 0 16px; border-radius: 2px; background: #2f2f37; flex: none; }
.bookmarks { display: flex; align-items: center; gap: 32px; height: 68px; padding: 0 28px 0 24px; font-size: 24px; white-space: nowrap; }
.bookmarks a { display: flex; align-items: center; gap: 12px; }
.folder { width: 40px; height: 32px; }
.bookmarks .bar { margin: 0; }
.more { margin-left: auto; }
.more svg { width: 20px; height: 18px; }

/* Console header */
.viewport { flex: 1; display: flex; }
.page { flex: 1; min-width: 0; display: flex; flex-direction: column; }
.vbar { width: 30px; padding: 6px 6px 8px; background: #fafafa; border-left: 2px solid #e8e8e8; display: flex; }
.vbar span { width: 16px; border-radius: 8px; background: #c1c1c1; }
.aws { background: #252f3e; color: #fff; font-size: 19px; border-bottom: 1px solid #414a58; white-space: nowrap; }
.aws-top { display: flex; align-items: center; height: 64px; }
.logo { width: 107px; padding-left: 29px; border-right: 2px solid #414750; }
.logo svg { width: 50px; height: 36px; }
.services { gap: 13px; width: 162px; justify-content: flex-start; padding-left: 26px; font-size: 18px; font-weight: 600; }
.services svg { width: 25px; height: 26px; }
.aws-search { display: flex; align-items: center; gap: 14px; flex: 0 1 864px; height: 48px; padding: 0 16px 0 18px; border: 1px solid #879196; border-radius: 3px; background: #16191f; font-size: 22px; color: #95a5a6; }
.aws-search svg { color: #d5dbdb; }
.aws-search input { flex: 1; }
.aws-search input::placeholder { color: #95a5a6; font-style: italic; }
.aws-tools { display: flex; margin-left: auto; }
.aws-tools button { width: 79px; height: 36px; border-right: 1px solid #414750; }
.aws-tools .menu { width: 137px; gap: 10px; }
.aws-tools .account { width: 207px; border: 0; padding-right: 5px; }
.shortcuts { display: flex; gap: 27px; height: 47px; padding: 4px 30px; }
.shortcuts a { display: flex; align-items: center; gap: 8px; height: 40px; }
.shortcuts svg { width: 38px; height: 38px; }

/* Layout */
.body { flex: 1; display: flex; }
.side { width: 450px; flex: none; background: #fff; border-right: 2px solid #c5cccf; color: var(--gray); }
.side-head { display: flex; justify-content: space-between; align-items: flex-start; padding: 32px 35px 32px 51px; border-bottom: 1px solid var(--line); }
.side-head h2 { width: 280px; font-size: 27px; line-height: 35px; color: var(--ink); }
.side-head button { width: 22px; height: 34px; }
.side-search { display: flex; align-items: center; gap: 13px; height: 50px; margin: 32px 51px 0 51px; padding: 0 14px; border: 1px solid var(--mid); border-radius: 3px; color: var(--mid); }
.side-search input { flex: 1; }
.side-search input::placeholder { color: var(--mid); font-style: italic; opacity: 1; }
.side-nav { margin: 40px 32px 0 32px; padding: 32px 0 0; border-top: 1px solid var(--line); }
.side-nav a { display: flex; align-items: center; gap: 8px; height: 48px; padding-left: 19px; }
.side-nav ul ul { padding-left: 32px; }
.side-nav .current { color: var(--blue); font-weight: 700; font-size: 21px; }
.group { gap: 12px; height: 49px; margin: 18px 0 0 -12px; font-weight: 700; font-size: 21px; }
.related { margin-top: 33px; }
.related h3 { padding: 0 0 1px 19px; font-size: 19px; line-height: 49px; font-weight: 400; font-style: italic; }

.main { flex: 1; min-width: 0; padding: 33px 62px 64px 62px; }
.link { color: var(--blue); border-bottom: 2px solid var(--blue); line-height: 30px; }
.crumbs { display: flex; align-items: center; height: 34px; gap: 17px; color: var(--mid); }
.crumbs span { font-weight: 700; font-size: 21px; }
.wizard { display: grid; grid-template-columns: 320px minmax(0, 1fr); column-gap: 128px; }
.steps { padding-top: 31px; }
.steps li { display: flex; flex-direction: column; align-items: flex-start; gap: 7px; margin-bottom: 26px; height: 93px; border-bottom: 1px solid #d5dbdb; }
.steps li:last-child { border: 0; }
.steps small { font-size: 19px; line-height: 28px; color: var(--mid); }
.steps b { font-size: 21px; }
.content { min-width: 0; }
h1 { font-size: 43px; line-height: 58px; font-weight: 400; padding: 32px 0 23px; }
.info { color: var(--blue); font-size: 18px; font-weight: 700; }
.card { background: #fafafa; border-top: 1px solid var(--line); box-shadow: 0 1px 1px rgba(0, 28, 36, .5), 1px 1px 1px rgba(0, 28, 36, .2), -1px 1px 1px rgba(0, 28, 36, .2); }
.card-head { padding: 24px 32px 0; border-bottom: 1px solid var(--line); }
.title-row { display: flex; justify-content: space-between; align-items: flex-start; }
.card h2 { font-size: 27px; line-height: 48px; }
.card h2 span { font-weight: 400; font-size: 30px; color: var(--mid); }
.card h2 .info { margin-left: 8px; }
.card p { font-size: 19px; line-height: 36px; color: var(--gray); }
.btn { height: 50px; padding: 0 32px; border: 1px solid var(--gray); border-radius: 3px; background: #fff; color: var(--gray); font-weight: 700; }
.refresh { width: 79px; padding: 0; }
.filters { display: flex; align-items: flex-end; gap: 16px; padding-top: 20px; }
.field { display: flex; align-items: center; height: 51px; padding: 0 13px; border: 1px solid var(--mid); border-radius: 3px; background: #fff; }
.search { flex: 1; min-width: 0; gap: 14px; color: var(--gray); }
.search input { flex: 1; color: var(--ink); }
.type label { display: block; padding-bottom: 6px; line-height: 36px; }
.select { position: relative; width: 196px; }
.select select { appearance: none; width: 100%; height: 48px; }
.select svg { position: absolute; right: 17px; top: 16px; color: var(--gray); pointer-events: none; }
.match { width: 162px; line-height: 50px; }
.pager { display: flex; align-items: center; justify-content: flex-end; height: 50px; margin: 13px 0 24px; color: #aab7b8; }
.pager b { width: 73px; text-align: center; font-size: 21px; color: var(--ink); }
.pager .prefs { height: 50px; margin-left: 22px; padding: 0 7px 0 20px; border-left: 1px solid var(--line); color: var(--gray); }
.scroller { overflow: hidden; }
table { width: 1280px; table-layout: fixed; border-collapse: separate; border-spacing: 0; }
.c-check { width: 86px; }
.c-name { width: 376px; }
.c-type { width: 331px; }
th, td { padding: 0; text-align: left; }
th { height: 65px; font-size: 21px; }
.th { display: flex; align-items: center; height: 36px; gap: 8px; padding: 0 22px 0 33px; border-right: 1px solid var(--gray); color: var(--gray); }
.th.light { border-color: var(--line); padding-left: 32px; }
.th.dark { color: var(--ink); }
.th.last { border: 0; }
.sort { margin-left: auto; }
td { height: 63px; padding-left: 33px; background: #f1faff; border: 1px solid var(--blue); border-width: 1px 0; }
td:first-child { padding-left: 31px; border-left-width: 1px; }
input[type="checkbox"] { appearance: none; display: block; position: relative; width: 22px; height: 22px; border-radius: 3px; background: var(--blue); }
input[type="checkbox"]::after { content: ""; position: absolute; left: 8px; top: 1px; width: 8px; height: 15px; border: solid #fff; border-width: 0 3px 3px 0; transform: rotate(40deg); }
.name { display: flex; align-items: center; gap: 32px; padding-left: 7px; color: var(--gray); }
.hbar { padding: 3px 4px 6px 6px; }
.hbar span { display: block; width: 66%; height: 16px; border-radius: 8px; background: #c1c1c1; }
.boundary { margin-top: 26px; padding: 23px 33px 30px; }
.boundary button { gap: 18px; height: 50px; font-size: 27px; font-weight: 700; }
.boundary svg { width: 14px; height: 16px; }
.boundary i { font-weight: 400; font-size: 30px; }
.actions { display: flex; justify-content: flex-end; gap: 12px; padding-top: 31px; }
.plain { border-color: transparent; background: none; }
.primary { padding: 0 31px; background: #f19f38; border-color: #f19f38; color: var(--ink); }

.rail { width: 66px; flex: none; background: #fff; border-left: 2px solid #c5cccf; color: var(--gray); }
.rail button { width: 100%; height: 64px; border-bottom: 1px solid #d5dbdb; }
.rail button:last-child { height: 66px; border: 0; }

.foot { display: flex; align-items: center; gap: 37px; height: 49px; padding: 0 26px; background: #252f3e; border-top: 1px solid #4b5361; color: #fff; font-size: 19px; }
.foot a { display: flex; align-items: center; gap: 8px; }
.copy { margin: 0 4px 0 auto; }
```
